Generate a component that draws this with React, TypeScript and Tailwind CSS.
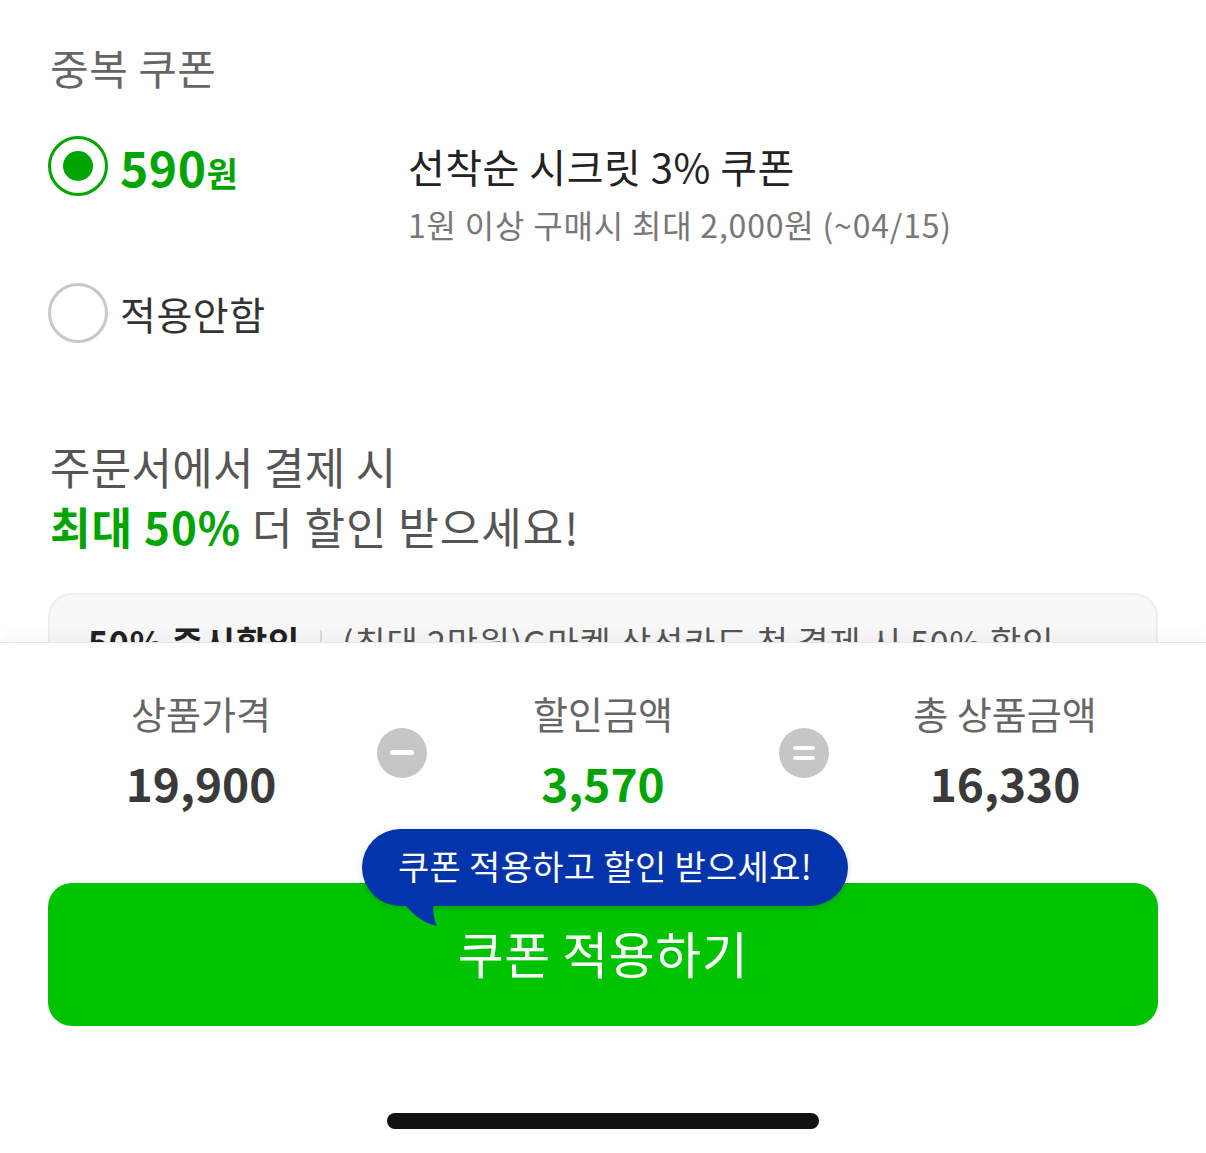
import React from "react"

const font = { fontFamily: '"Noto Sans CJK KR", "Noto Sans", sans-serif' }

function Radio({ checked }: { checked?: boolean }) {
  return checked ? (
    <div className="w-[60px] h-[60px] rounded-full border-[3px] border-[#00a400] flex items-center justify-center shrink-0">
      <div className="w-[30px] h-[30px] rounded-full bg-[#00a400]" />
    </div>
  ) : (
    <div className="w-[60px] h-[60px] rounded-full border-[3px] border-[#c8c8c8] shrink-0" />
  )
}

function Operator({ kind }: { kind: "minus" | "equal" }) {
  return (
    <div className="w-0 flex justify-center items-center self-stretch pt-[6px]">
      <div className="w-[50px] h-[50px] shrink-0 rounded-full bg-[#c6c6c6] flex flex-col items-center justify-center gap-[6px]">
        {kind === "minus" ? (
          <div className="w-[24px] h-[5px] rounded-full bg-white" />
        ) : (
          <>
            <div className="w-[22px] h-[4px] rounded-full bg-white" />
            <div className="w-[22px] h-[4px] rounded-full bg-white" />
          </>
        )}
      </div>
    </div>
  )
}

function PriceCol({ label, value, green }: { label: string; value: string; green?: boolean }) {
  return (
    <div className="flex-1 flex flex-col items-center">
      <div className="text-[38px] leading-[48px] text-[#666]">{label}</div>
      <div
        className={`mt-[17px] text-[46px] leading-[56px] font-bold ${green ? "text-[#00a400]" : "text-[#3a3a3a]"}`}
      >
        {value}
      </div>
    </div>
  )
}

export default function App() {
  return (
    <div className="w-[1206px] h-[1153px] bg-white flex flex-col overflow-hidden" style={font}>
      {/* 쿠폰 선택 영역 */}
      <div className="h-[642px] shrink-0 overflow-hidden px-[48px] pt-[43px]">
        <div className="text-[42px] leading-[48px] text-[#666] pl-[2px] tracking-[0.5px]">중복 쿠폰</div>

        <div className="mt-[45px] flex">
          <div className="w-[360px] shrink-0 flex items-center gap-[12px] h-[60px]">
            <Radio checked />
            <div className="font-bold text-[#00a400] flex items-baseline">
              <span className="text-[48px] leading-[56px] tracking-[0.5px]">590</span>
              <span className="text-[34px] leading-[40px]">원</span>
            </div>
          </div>
          <div className="flex flex-col">
            <div className="h-[60px] flex items-center text-[40px] text-[#222] tracking-[0.5px]">
              선착순 시크릿 3% 쿠폰
            </div>
            <div className="mt-[6px] text-[32px] leading-[44px] text-[#777] tracking-[0.8px]">
              1원 이상 구매시 최대 2,000원 (~04/15)
            </div>
          </div>
        </div>

        <div className="mt-[37px] flex items-center gap-[12px]">
          <Radio />
          <div className="text-[39px] leading-[48px] text-[#333] tracking-[0.5px]">적용안함</div>
        </div>

        <div className="mt-[93px] pl-[2px] text-[44px] leading-[60px] text-[#555] tracking-[0.3px]">
          <div>주문서에서 결제 시</div>
          <div className="tracking-[1px]">
            <span className="font-bold text-[#00a400]">최대 50%</span> 더 할인 받으세요!
          </div>
        </div>

        <div className="mt-[37px] rounded-[24px] border-2 border-[#eeeeee] bg-[#f8f8f8] pl-[38px] pt-[24px] pb-[24px] flex items-center gap-[20px] text-[34px] leading-[46px] tracking-[0.8px]">
          <span className="font-bold text-[#222]">50% 즉시할인</span>
          <span className="w-[2px] h-[24px] bg-[#ddd]" />
          <span className="text-[#555]">(최대 2만원)G마켓 삼성카드 첫 결제 시 50% 할인</span>
        </div>
      </div>

      {/* 하단 금액 요약 */}
      <div className="relative flex-1 bg-white border-t border-[#e6e6e6] shadow-[0_-6px_14px_rgba(0,0,0,0.04)] pt-[46px] flex flex-col">
        <div className="flex">
          <PriceCol label="상품가격" value="19,900" />
          <Operator kind="minus" />
          <PriceCol label="할인금액" value="3,570" green />
          <Operator kind="equal" />
          <PriceCol label="총 상품금액" value="16,330" />
        </div>

        <div className="relative mx-[48px] mt-[73px]">
          <button className="w-full h-[143px] rounded-[24px] bg-[#00c300] text-white text-[50px] tracking-[0.5px] flex items-center justify-center pb-[4px]">
            쿠폰 적용하기
          </button>

          {/* 말풍선 */}
          <div className="absolute left-[314px] top-[-54px] h-[77px] px-[36px] rounded-full bg-[#0434a9] shadow-[0_2px_6px_rgba(0,0,0,0.15)] flex items-center text-white text-[34px] tracking-[0.3px] pb-[4px]">
            쿠폰 적용하고 할인 받으세요!
            <svg className="absolute left-[38px] top-[68px]" width="42" height="34" viewBox="0 0 42 34">
              <path d="M0 0 C 8 14, 22 26, 37 29 C 33 20, 32 10, 35 0 Z" fill="#0434a9" />
            </svg>
          </div>
        </div>

        <div className="mt-[87px] self-center w-[432px] h-[16px] rounded-full bg-[#111]" />
      </div>
    </div>
  )
}
